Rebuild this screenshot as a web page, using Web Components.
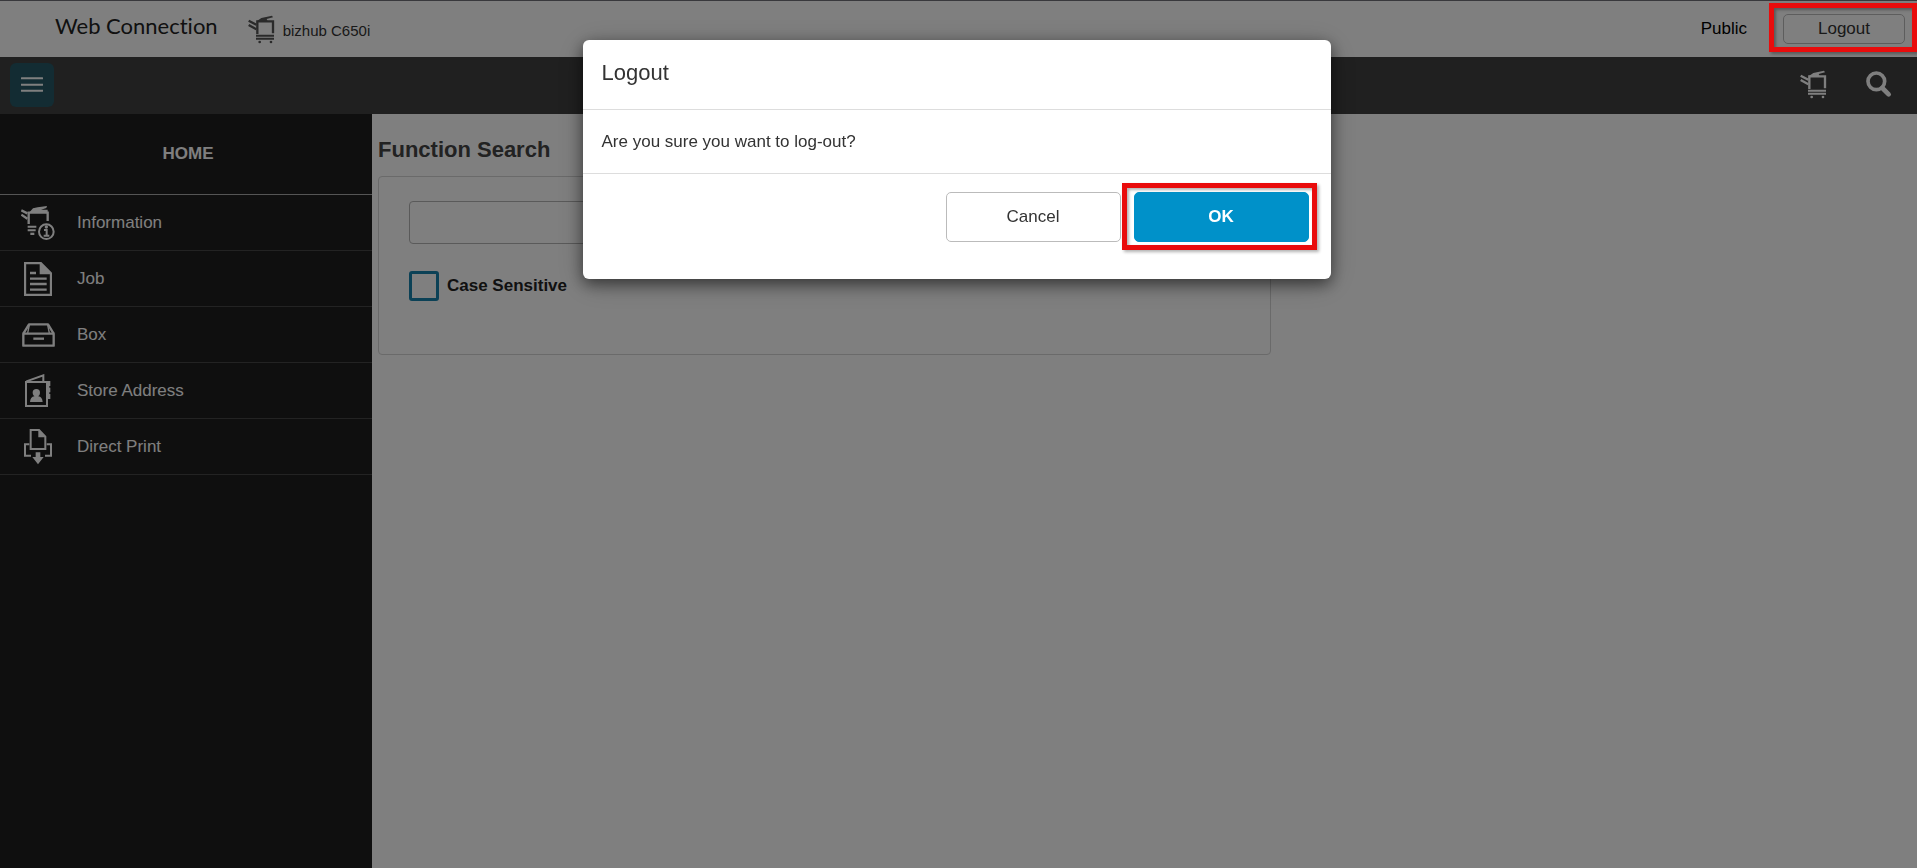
<!DOCTYPE html>
<html lang="en">
<head>
<meta charset="utf-8">
<meta name="viewport" content="width=device-width, initial-scale=1">
<title>Web Connection</title>
<style>
  html, body {
    height: 100%;
    margin: 0;
  }

  body {
    font-family: "Liberation Sans", Arial, sans-serif;
    font-size: 17px;
    line-height: 24px;
    color: #333;
    background: #fff;
  }
</style>
</head>
<body>
<web-connection></web-connection>

<script>
const ICONS = {
  printer: {
    width: 27, height: 29,
    art: `<g fill="none" stroke="currentColor" stroke-width="7">
      <path d="M2 17 L25 29 M2 30 L25 43"/>
      <path d="M28 57 V19 H75 V55"/>
      <path d="M24 62 H78 M24 71 H78" stroke-width="6"/>
    </g>
    <path fill="currentColor" d="M27 18 L40 9 L72 2 L75 7 L56 12 L60 20 H27 Z"/>
    <circle cx="35" cy="81" r="4" fill="currentColor"/>
    <circle cx="69" cy="81" r="4" fill="currentColor"/>`
  },
  search: {
    width: 26, height: 27,
    art: `<circle cx="31" cy="31" r="25" fill="none" stroke="currentColor" stroke-width="11"/>
    <path d="M49 51 L68 70" stroke="currentColor" stroke-width="14" stroke-linecap="round"/>`
  },
  information: {
    width: 34, height: 34,
    art: `<g fill="none" stroke="currentColor" stroke-width="7">
      <path d="M1 13 L19 22 M1 26 L19 38"/>
      <path d="M23 54 V20 H80 V45"/>
      <path d="M20 62 H46 M20 73 H44" stroke-width="6"/>
      <circle cx="76" cy="77" r="22" stroke-width="6"/>
      <path d="M69 72 H77 V89 M68 89 H85" stroke-width="6"/>
    </g>
    <path fill="currentColor" d="M24 20 L36 7 L50 4 L78 0 L76 6 L60 11 H80 V20 Z"/>
    <path fill="currentColor" d="M28 80 H40 V87 H28 Z"/>
    <circle cx="76" cy="63" r="5" fill="currentColor"/>`
  },
  job: {
    width: 28, height: 34,
    art: `<path d="M3 3 H50 L81 34 V99 H3 Z" fill="none" stroke="currentColor" stroke-width="7"/>
    <path d="M47 2 L82 37 H47 Z" fill="currentColor"/>
    <path d="M18 33 H36 M18 50 H68 M18 66 H68 M18 83 H68" stroke="currentColor" stroke-width="7"/>`
  },
  box: {
    width: 33, height: 24,
    art: `<g fill="none" stroke="currentColor" stroke-width="7" stroke-linejoin="round">
      <path d="M4 32 H95 V68 H4 Z"/>
      <path d="M4 32 L21 4 H78 L95 32"/>
      <path d="M17 30 L22 6 M82 30 L77 6" stroke-width="4"/>
      <path d="M34 47 H66"/>
    </g>`
  },
  address: {
    width: 26, height: 33,
    art: `<path d="M3 24 H66 V96 H3 Z" fill="none" stroke="currentColor" stroke-width="6"/>
    <path d="M4 22 L55 4 V22" fill="none" stroke="currentColor" stroke-width="6"/>
    <path d="M67 21 H76 V36 H73 V41 H76 V55 H73 V60 H76 V75 H67 Z" fill="currentColor"/>
    <circle cx="34" cy="56" r="11" fill="currentColor"/>
    <path d="M15 84 Q16 69 28 67 L31 62 H37 L40 67 Q52 69 53 84 Z" fill="currentColor"/>`
  },
  print: {
    width: 28, height: 36,
    art: `<g fill="none" stroke="currentColor" stroke-width="6">
      <path d="M20 3 H45 L64 23 V60 H20 Z"/>
      <path d="M16 46 H3 V80 H21 M68 46 H81 V80 H63"/>
    </g>
    <path d="M43 2 L65 25 H43 Z" fill="currentColor"/>
    <path d="M35 70 H49 V84 H59 L42 106 L25 84 H35 Z" fill="currentColor"/>`
  },
  menu: {
    width: 22, height: 15,
    art: `<path d="M2 4 H64 M2 23 H64 M2 41 H64" stroke="currentColor" stroke-width="6" stroke-linecap="round"/>`
  }
};

class AppIcon extends HTMLElement {
  constructor() {
    super();
    this.attachShadow({ mode: "open" });
  }

  connectedCallback() {
    const icon = ICONS[this.getAttribute("name")];
    this.shadowRoot.innerHTML = /* html */ `
    <style>
      :host { display: inline-flex; }
      svg { display: block; }
    </style>
    <svg width="${icon.width}" height="${icon.height}" viewBox="0 0 ${icon.width * 3} ${icon.height * 3}" aria-hidden="true">${icon.art}</svg>`;
  }
}

// Red marker drawn over the slotted control, above the dialog backdrop
class MarkFrame extends HTMLElement {
  constructor() {
    super();
    this.attachShadow({ mode: "open" });
    this.shadowRoot.innerHTML = /* html */ `
    <style>
      :host {
        display: block;
        position: relative;
      }
      .frame {
        position: absolute;
        inset: var(--frame-inset, -8px);
        z-index: 30;
        border: 5px solid #e90c0c;
        box-shadow: 2px 2px 3px rgba(0, 0, 0, 0.3), inset 2px 2px 3px rgba(0, 0, 0, 0.3);
        pointer-events: none;
      }
    </style>
    <slot></slot>
    <div class="frame"></div>`;
  }
}

class AppButton extends HTMLElement {
  constructor() {
    super();
    this.attachShadow({ mode: "open" });
    this.shadowRoot.innerHTML = /* html */ `
    <style>
      :host {
        display: block;
        width: 175px;
        height: 50px;
      }
      :host([small]) {
        width: 122px;
        height: 30px;
      }
      button {
        box-sizing: border-box;
        width: 100%;
        height: 100%;
        padding: 0;
        border: 1px solid #bbb;
        border-radius: 5px;
        background: #fff;
        color: #333;
        font: inherit;
        cursor: pointer;
      }
      :host([primary]) button {
        border-color: #0091c9;
        background: #0091c9;
        color: #fff;
        font-weight: bold;
      }
    </style>
    <button type="button"><slot></slot></button>`;
  }
}

class TopHeader extends HTMLElement {
  constructor() {
    super();
    this.attachShadow({ mode: "open" });
    this.shadowRoot.innerHTML = /* html */ `
    <style>
      :host { display: block; }
      header {
        box-sizing: border-box;
        display: flex;
        align-items: center;
        height: 57px;
        padding: 0 12px 0 55px;
        border-top: 1px solid #707078;
        background: #fff;
      }
      .logo {
        margin-bottom: 6px;
        color: #222;
        font-family: Lato, sans-serif;
        font-size: 22px;
        font-variant-ligatures: none;
        line-height: 32px;
      }
      .device {
        display: flex;
        align-items: center;
        gap: 8px;
        margin-left: 30px;
        font-size: 15px;
      }
      .device app-icon { color: #555; }
      .device span { margin-top: 4px; }
      .user {
        margin-left: auto;
        margin-right: 36px;
        color: #000;
      }
      mark-frame { --frame-inset: -11px -12px -8px -14px; }
    </style>
    <header>
      <div class="logo">Web Connection</div>
      <div class="device"><app-icon name="printer"></app-icon><span>bizhub C650i</span></div>
      <div class="user">Public</div>
      <mark-frame><app-button small>Logout</app-button></mark-frame>
    </header>`;
  }
}

class ToolBar extends HTMLElement {
  constructor() {
    super();
    this.attachShadow({ mode: "open" });
    this.shadowRoot.innerHTML = /* html */ `
    <style>
      :host {
        box-sizing: border-box;
        display: flex;
        align-items: center;
        height: 57px;
        padding: 0 25px 2px 10px;
        background: #404040;
        color: #fff;
      }
      button {
        display: flex;
        align-items: center;
        justify-content: center;
        padding: 0;
        border: 0;
        background: none;
        color: inherit;
        cursor: pointer;
      }
      .menu {
        width: 44px;
        height: 44px;
        margin-right: auto;
        border-radius: 6px;
        background: #265866;
      }
      .tools {
        display: flex;
        align-items: center;
        gap: 39px;
      }
    </style>
    <button class="menu" type="button" aria-label="Menu"><app-icon name="menu"></app-icon></button>
    <div class="tools">
      <button type="button" aria-label="Device"><app-icon name="printer"></app-icon></button>
      <button type="button" aria-label="Search"><app-icon name="search"></app-icon></button>
    </div>`;
  }
}

class SideItem extends HTMLElement {
  constructor() {
    super();
    this.attachShadow({ mode: "open" });
  }

  connectedCallback() {
    this.shadowRoot.innerHTML = /* html */ `
    <style>
      :host { display: block; }
      a {
        box-sizing: border-box;
        display: flex;
        align-items: center;
        gap: 1px;
        height: 56px;
        border-bottom: 1px solid #464646;
        color: #fff;
        text-decoration: none;
      }
      app-icon {
        justify-content: center;
        width: 76px;
      }
    </style>
    <a href="#${this.getAttribute("icon")}"><app-icon name="${this.getAttribute("icon")}"></app-icon><slot></slot></a>`;
  }
}

class SideMenu extends HTMLElement {
  constructor() {
    super();
    this.attachShadow({ mode: "open" });
    this.shadowRoot.innerHTML = /* html */ `
    <style>
      :host {
        display: block;
        background: #1e1e1e;
        color: #fff;
      }
      h2 {
        margin: 0;
        padding: 28px 0 28px 4px;
        border-bottom: 1px solid #aaa;
        font-size: 17px;
        line-height: 24px;
        text-align: center;
      }
    </style>
    <nav>
      <h2>HOME</h2>
      <slot></slot>
    </nav>`;
  }
}

class FunctionSearch extends HTMLElement {
  constructor() {
    super();
    this.attachShadow({ mode: "open" });
    this.shadowRoot.innerHTML = /* html */ `
    <style>
      :host {
        display: block;
        padding: 20px 6px;
      }
      h1 {
        margin: 0 0 10px;
        color: #444;
        font-size: 22px;
        line-height: 32px;
      }
      .panel {
        box-sizing: border-box;
        max-width: 893px;
        padding: 24px 30px 53px;
        border: 1px solid #d4d4d4;
        border-radius: 4px;
      }
      input[type="text"] {
        box-sizing: border-box;
        display: block;
        width: 90%;
        height: 43px;
        padding: 0 10px;
        border: 1px solid #b4b4b4;
        border-radius: 4px;
        background: #fff;
        font: inherit;
      }
      label {
        display: flex;
        align-items: center;
        gap: 8px;
        margin-top: 27px;
        color: #222;
        font-weight: bold;
      }
      input[type="checkbox"] {
        appearance: none;
        box-sizing: border-box;
        width: 30px;
        height: 30px;
        margin: 0;
        border: 3px solid #1682ac;
        border-radius: 3px;
      }
    </style>
    <h1 id="title">Function Search</h1>
    <div class="panel">
      <input type="text" aria-labelledby="title">
      <label><input type="checkbox">Case Sensitive</label>
    </div>`;
  }
}

class ConfirmDialog extends HTMLElement {
  constructor() {
    super();
    this.attachShadow({ mode: "open" });
    this.shadowRoot.innerHTML = /* html */ `
    <style>
      :host {
        position: fixed;
        inset: 0;
        z-index: 10;
        display: flex;
        justify-content: center;
        align-items: flex-start;
        padding: 40px 4px 0 0;
        background: rgba(0, 0, 0, 0.5);
      }
      dialog {
        position: static;
        box-sizing: border-box;
        width: 100%;
        max-width: 748px;
        margin: 0;
        padding: 0;
        border: 0;
        border-radius: 6px;
        background: #fff;
        color: #333;
        box-shadow: 0 5px 15px rgba(0, 0, 0, 0.5), 0 5px 30px rgba(0, 0, 0, 0.2);
      }
      .title, .body {
        padding: 19px;
        border-bottom: 1px solid #ddd;
      }
      .title {
        margin: 0;
        padding: 17px 19px 20px;
        font-size: 22px;
        font-weight: normal;
        line-height: 32px;
      }
      .body { padding: 20px 19px 19px; }
      .actions {
        display: flex;
        justify-content: flex-end;
        gap: 13px;
        padding: 18px 22px 37px;
      }
    </style>
    <dialog open aria-labelledby="title">
      <h2 class="title" id="title"><slot name="title"></slot></h2>
      <div class="body"><slot></slot></div>
      <div class="actions"><slot name="actions"></slot></div>
    </dialog>`;
  }
}

class WebConnection extends HTMLElement {
  constructor() {
    super();
    this.attachShadow({ mode: "open" });
    this.shadowRoot.innerHTML = /* html */ `
    <style>
      :host {
        display: flex;
        flex-direction: column;
        min-height: 100%;
      }
      .columns {
        display: grid;
        grid-template-columns: 372px 1fr;
        flex: 1;
      }
      mark-frame { --frame-inset: -9px -8px -8px -12px; }
    </style>
    <top-header></top-header>
    <tool-bar></tool-bar>
    <div class="columns">
      <side-menu>
        <side-item icon="information">Information</side-item>
        <side-item icon="job">Job</side-item>
        <side-item icon="box">Box</side-item>
        <side-item icon="address">Store Address</side-item>
        <side-item icon="print">Direct Print</side-item>
      </side-menu>
      <main><function-search></function-search></main>
    </div>
    <confirm-dialog>
      <span slot="title">Logout</span>
      Are you sure you want to log-out?
      <app-button slot="actions">Cancel</app-button>
      <mark-frame slot="actions"><app-button primary>OK</app-button></mark-frame>
    </confirm-dialog>`;
  }
}

customElements.define("app-icon", AppIcon);
customElements.define("mark-frame", MarkFrame);
customElements.define("app-button", AppButton);
customElements.define("top-header", TopHeader);
customElements.define("tool-bar", ToolBar);
customElements.define("side-item", SideItem);
customElements.define("side-menu", SideMenu);
customElements.define("function-search", FunctionSearch);
customElements.define("confirm-dialog", ConfirmDialog);
customElements.define("web-connection", WebConnection);
</script>
</body>
</html>
